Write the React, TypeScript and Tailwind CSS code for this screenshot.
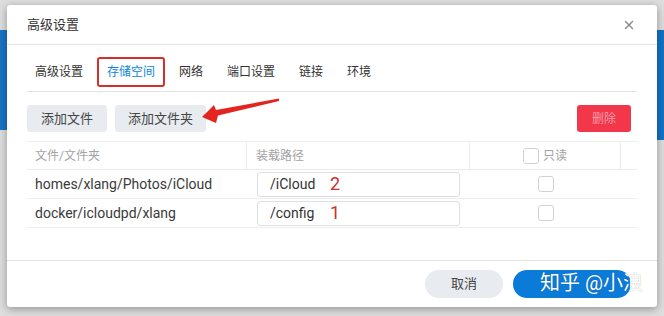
import { X } from "lucide-react";

const tabs = ["高级设置", "存储空间", "网络", "端口设置", "链接", "环境"];

const rows = [
  { src: "homes/xlang/Photos/iCloud", mount: "/iCloud", mark: "2" },
  { src: "docker/icloudpd/xlang", mount: "/config", mark: "1" },
];

function Box() {
  return <span className="inline-block w-[16px] h-[16px] rounded-[3px] border border-[#cfd3d8] bg-white" />;
}

export default function App() {
  return (
    <div className="flex w-[664px] h-[316px] overflow-hidden bg-[#dedede] font-['Roboto','Noto_Sans_CJK_SC',sans-serif] text-[#333]">
      {/* left backdrop strip */}
      <div className="w-[7px] flex flex-col">
        <div className="h-[30px]" />
        <div className="h-[100px] bg-[#1b74c6]" />
      </div>

      {/* dialog */}
      <div className="relative mt-[5px] w-[650px] h-[302px] flex flex-col bg-white rounded-[3px] shadow-[0_2px_8px_rgba(0,0,0,0.35)]">
        <div className="h-[40px] flex items-center justify-between px-[20px] border-b border-[#e6e6e6]">
          <span className="text-[13px]">高级设置</span>
          <X size={14} strokeWidth={2.5} className="text-[#8a8a8a] mr-[1px]" />
        </div>

        <div className="px-[20px] flex flex-col">
          {/* tabs */}
          <div className="flex gap-[8px] pt-[12px] pb-[4px] border-b border-[#e3e3e3]">
            {tabs.map((t, i) => (
              <div
                key={t}
                className={
                  i === 1
                    ? "-mx-[2px] px-[8px] py-[5px] border-2 border-[#d6302a] rounded-[3px] text-[12px] leading-[16px] text-[#0a85d9]"
                    : "px-[6px] py-[5px] border-2 border-transparent text-[12px] leading-[16px] text-[#333]"
                }
              >
                {t}
              </div>
            ))}
          </div>

          {/* toolbar */}
          <div className="mt-[13px] flex items-center pr-[6px]">
            <button className="h-[27px] px-[14px] rounded-[3px] bg-[#e8ecf0] text-[13px] text-[#444]">添加文件</button>
            <button className="ml-[8px] h-[27px] px-[13px] rounded-[3px] bg-[#e8ecf0] text-[13px] text-[#444]">添加文件夹</button>
            <button className="ml-auto h-[27px] w-[54px] rounded-[3px] bg-[#f2374b] text-[12px] text-[#f79aa6]">删除</button>
          </div>

          {/* table */}
          <div className="mt-[9px] border-t border-[#eeeeee]">
            <div className="flex h-[28px] items-center border-b border-[#ebebeb] text-[12px] text-[#a3a3a3]">
              <div className="w-[220px] h-full flex items-center pl-[8px] border-r border-[#eaeaea]">文件/文件夹</div>
              <div className="w-[223px] h-full flex items-center pl-[9px] border-r border-[#eaeaea]">装载路径</div>
              <div className="w-[151px] h-full flex items-center justify-center gap-[4px] border-r border-[#eaeaea]">
                <Box />
                <span>只读</span>
              </div>
              <div className="flex-1" />
            </div>
            {rows.map((r) => (
              <div key={r.src} className="flex h-[29px] items-center border-b border-[#ededed]">
                <div className="w-[220px] pl-[8px] text-[14px] text-[#3a3a3a]">{r.src}</div>
                <div className="w-[223px] pl-[10px]">
                  <div className="w-[203px] h-[25px] flex items-center pl-[12px] rounded-[3px] border border-[#dcdfe3] text-[14px] text-[#333]">
                    <span className="w-[60px]">{r.mount}</span>
                    <span className="text-[18px] leading-none text-[#c9302c]">{r.mark}</span>
                  </div>
                </div>
                <div className="w-[151px] flex justify-center">
                  <Box />
                </div>
              </div>
            ))}
          </div>
        </div>

        {/* footer */}
        <div className="mt-auto h-[47px] flex items-center justify-end gap-[10px] pr-[26px] border-t border-[#e3e3e3]">
          <button className="h-[28px] w-[78px] rounded-full bg-[#e8ecf0] text-[13px] text-[#444]">取消</button>
          <button className="h-[28px] w-[118px] rounded-full bg-[#0b7bd9]" />
        </div>

        {/* watermark */}
        <div className="absolute left-[533px] top-[263px] text-[20px] text-white whitespace-pre [text-shadow:0_0_1px_rgba(0,0,0,0.35)]">
          知乎 @小浪
        </div>

        {/* annotation arrow */}
        <svg className="absolute left-[188px] top-[90px]" width="90" height="32" viewBox="195 95 90 32">
          <polygon
            points="202,117 214,105 216,110 279,98.5 279,101 218,115.5 216,123"
            fill="#e3241f"
          />
        </svg>
      </div>

      {/* right backdrop strip */}
      <div className="w-[7px] flex flex-col">
        <div className="h-[30px]" />
        <div className="h-[110px] bg-[#1474c8]" />
      </div>
    </div>
  );
}
